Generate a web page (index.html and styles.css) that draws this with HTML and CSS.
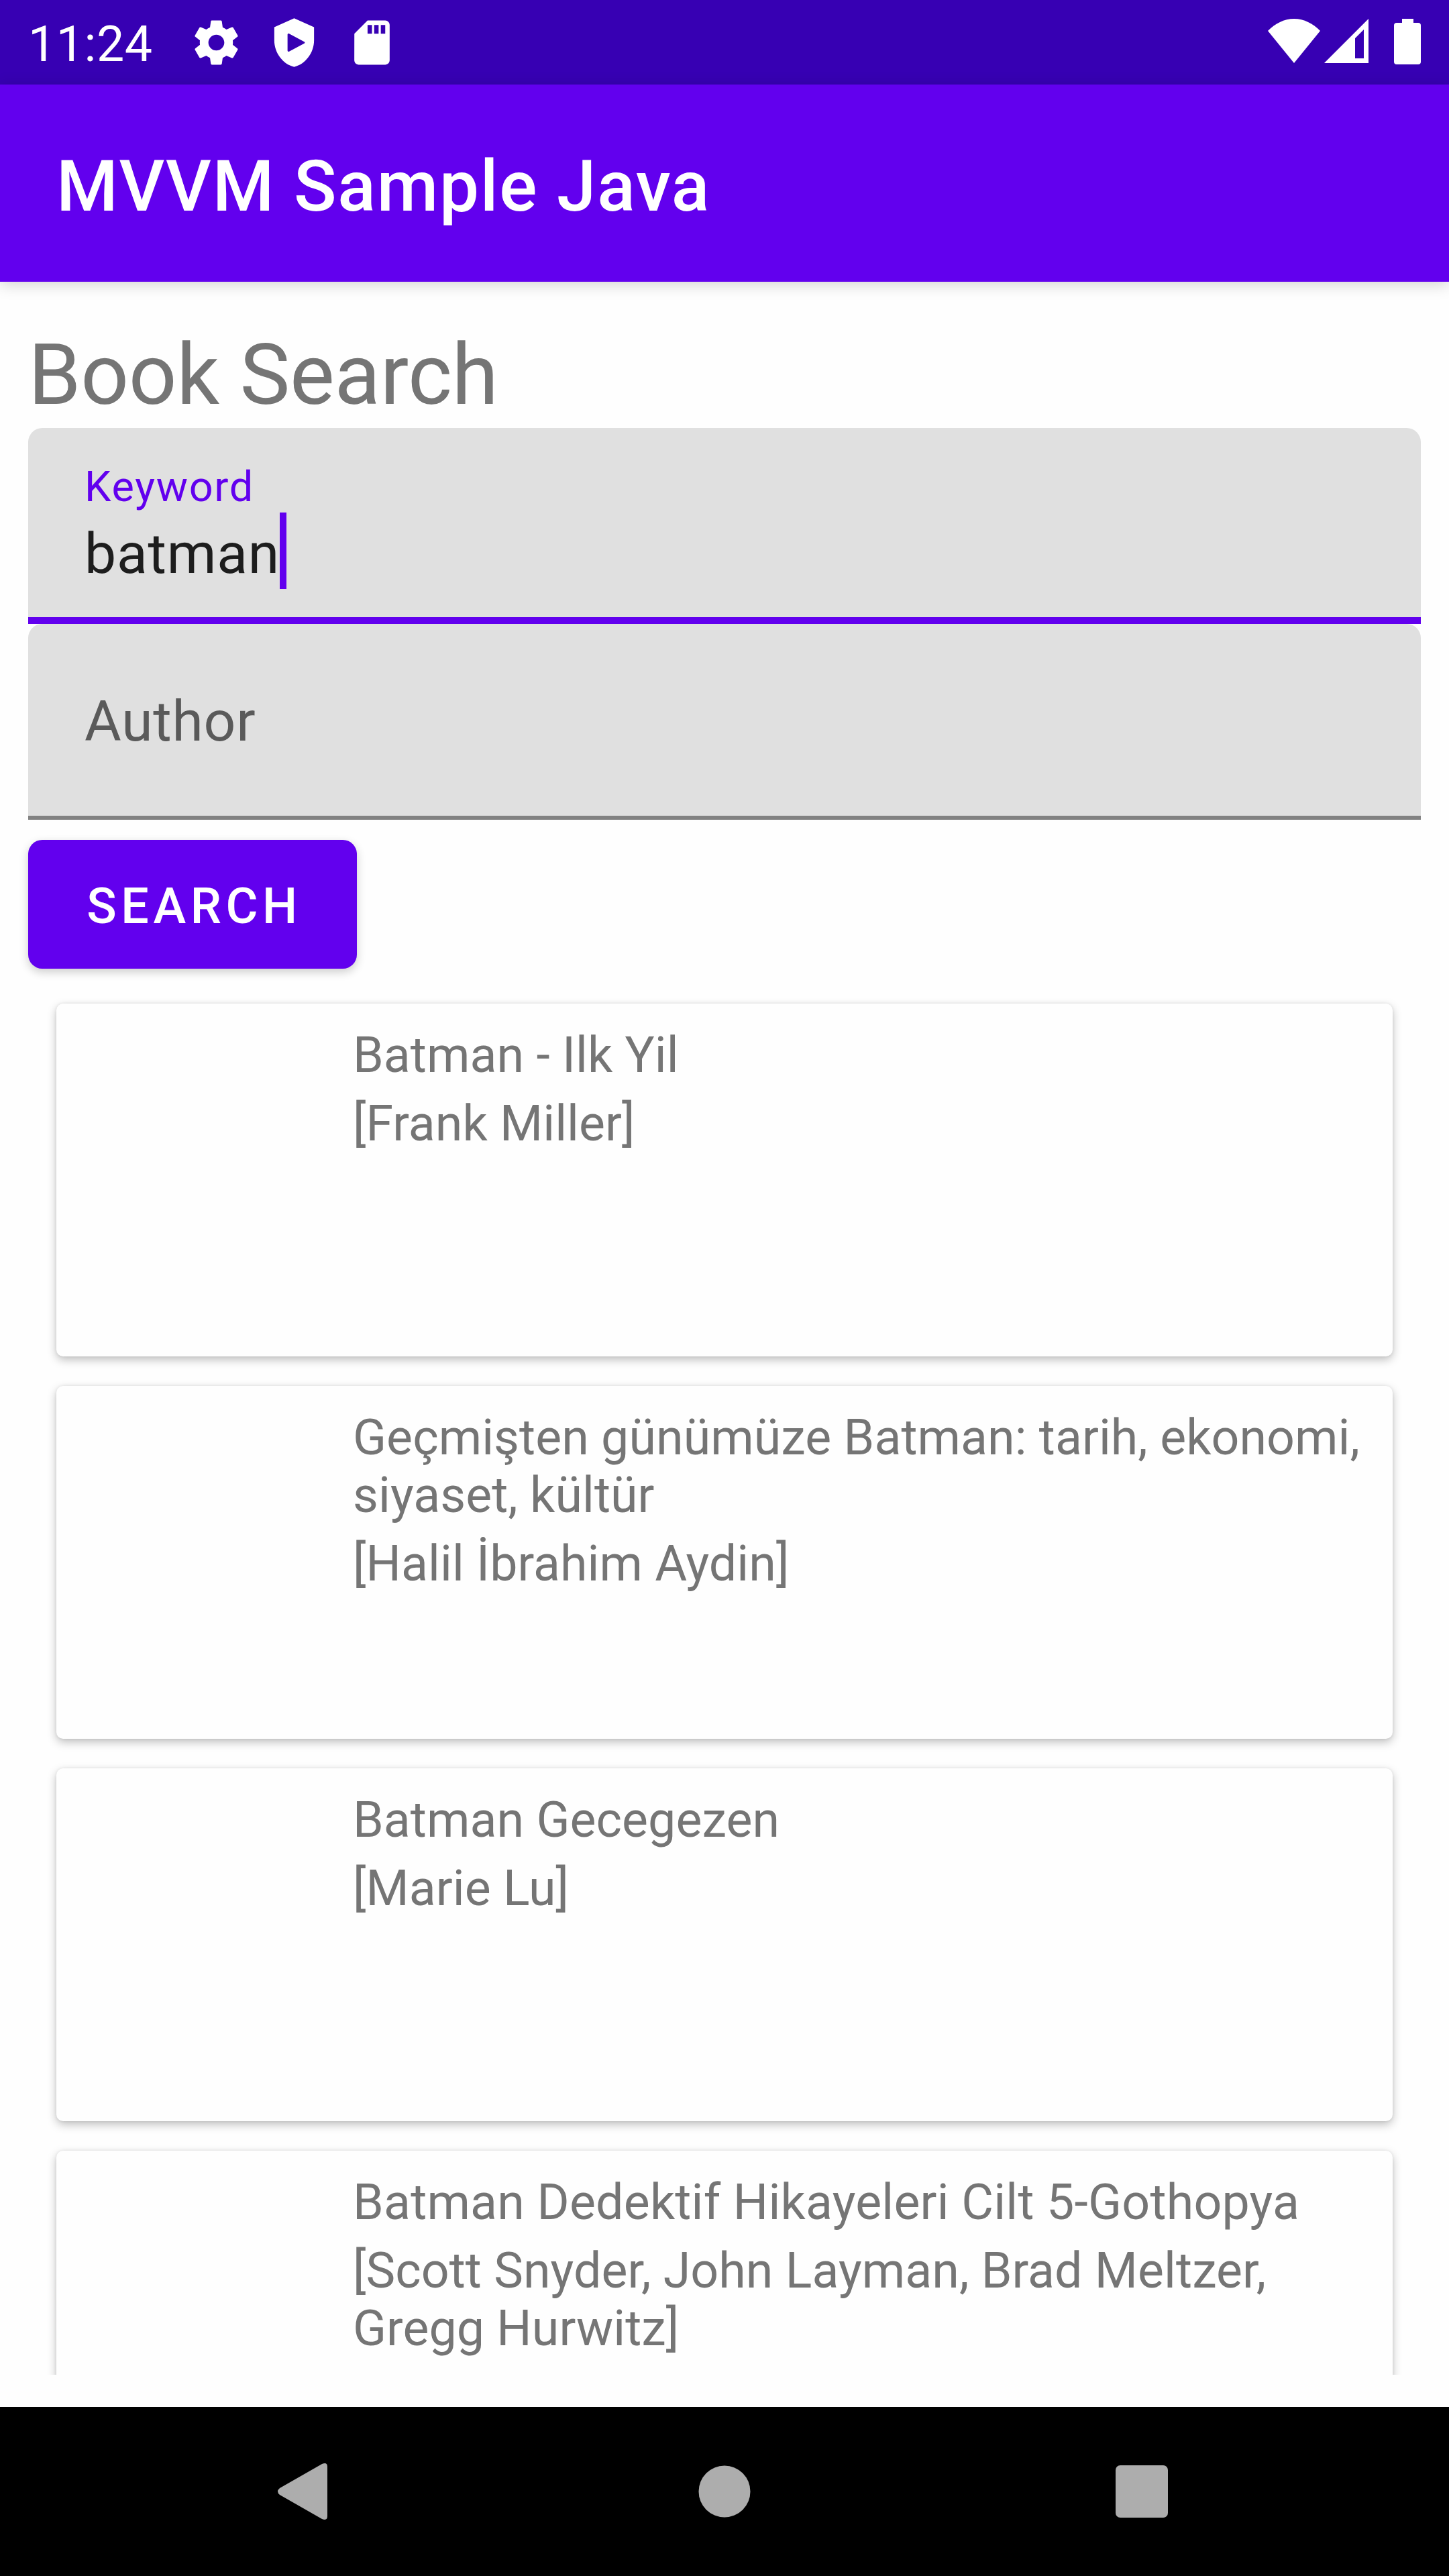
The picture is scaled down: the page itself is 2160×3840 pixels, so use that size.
FILE: index.html
```html
<!DOCTYPE html>
<html lang="en">
<head>
<meta charset="utf-8">
<title>MVVM Sample Java</title>
<link rel="stylesheet" href="styles.css">
</head>
<body>
<div class="screen">
  <header class="status-bar">
    <span class="clock">11:24</span>
    <div class="notifications">
      <svg class="status-icon" viewBox="0 0 24 24"><path d="M19.43 12.98c.04-.32.07-.64.07-.98s-.03-.66-.07-.98l2.11-1.65c.19-.15.24-.42.12-.64l-2-3.46c-.12-.22-.39-.3-.61-.22l-2.49 1c-.52-.4-1.08-.73-1.69-.98l-.38-2.65C14.46 2.18 14.25 2 14 2h-4c-.25 0-.46.18-.49.42l-.38 2.65c-.61.25-1.17.59-1.69.98l-2.49-1c-.23-.09-.49 0-.61.22l-2 3.46c-.13.22-.07.49.12.64l2.11 1.65c-.04.32-.07.65-.07.98s.03.66.07.98l-2.11 1.65c-.19.15-.24.42-.12.64l2 3.46c.12.22.39.3.61.22l2.49-1c.52.4 1.08.73 1.69.98l.38 2.65c.03.24.24.42.49.42h4c.25 0 .46-.18.49-.42l.38-2.65c.61-.25 1.17-.59 1.69-.98l2.49 1c.23.09.49 0 .61-.22l2-3.46c.12-.22.07-.49-.12-.64l-2.11-1.65zM12 15.6c-1.98 0-3.6-1.62-3.6-3.6s1.62-3.6 3.6-3.6 3.6 1.62 3.6 3.6-1.62 3.6-3.6 3.6z"/></svg>
      <svg class="status-icon" viewBox="0 0 24 24"><path fill-rule="evenodd" d="M12 1 3 5v6c0 5.55 3.84 10.74 9 12 5.16-1.26 9-6.45 9-12V5l-9-4zM9 8.4c0-.4.4-.65.75-.4l6.8 3.6c.4.2.4.6 0 .8l-6.8 3.6c-.35.2-.75 0-.75-.4V8.4z"/></svg>
      <svg class="status-icon" viewBox="0 0 24 24"><path d="M18 2h-8L4.02 8 4 20c0 1.100.9 2 2 2h12c1.100 0 2-.9 2-2V4c0-1.100-.9-2-2-2zm-6 6h-2V4h2v4zm3 0h-2V4h2v4zm3 0h-2V4h2v4z"/></svg>
    </div>
    <div class="system">
      <svg class="wifi" viewBox="0 0 78 66"><path d="M0 18C11 7 24 0 39 0s28 7 39 18L39 66z"/></svg>
      <svg class="signal" viewBox="0 0 66 66"><path fill-rule="evenodd" d="M66 0v66H0zM46 29v30h13V16z"/></svg>
      <svg class="battery" viewBox="0 0 40 68"><path d="M12 0h17v6h7a4 4 0 0 1 4 4v54a4 4 0 0 1-4 4H4a4 4 0 0 1-4-4V10a4 4 0 0 1 4-4h8z"/></svg>
    </div>
  </header>

  <div class="app-bar"><h1 class="app-title">MVVM Sample Java</h1></div>

  <main class="content">
    <h2 class="heading">Book Search</h2>
    <div class="field field-focused">
      <span class="field-label">Keyword</span>
      <div class="field-entry"><span class="field-value">batman</span><i class="caret"></i></div>
    </div>
    <div class="field field-empty"><span class="field-hint">Author</span></div>
    <button class="search-button" type="button">SEARCH</button>

    <div class="results">
      <article class="card">
        <div class="cover"></div>
        <div class="book"><p class="book-title">Batman - Ilk Yil</p><p class="book-author">[Frank Miller]</p></div>
      </article>
      <article class="card">
        <div class="cover"></div>
        <div class="book"><p class="book-title">Geçmişten günümüze Batman: tarih, ekonomi, siyaset, kültür</p><p class="book-author">[Halil İbrahim Aydin]</p></div>
      </article>
      <article class="card">
        <div class="cover"></div>
        <div class="book"><p class="book-title">Batman Gecegezen</p><p class="book-author">[Marie Lu]</p></div>
      </article>
      <article class="card">
        <div class="cover"></div>
        <div class="book"><p class="book-title book-title-long">Batman Dedektif Hikayeleri Cilt 5-Gothopya</p><p class="book-author">[Scott Snyder, John Layman, Brad Meltzer, Gregg Hurwitz]</p></div>
      </article>
    </div>
  </main>

  <nav class="nav-bar">
    <div class="nav-item"><svg class="nav-back" viewBox="0 0 74 84"><path d="M3 37 66 1q8-3 8 4v74q0 7-8 4L3 47q-6-5 0-10z"/></svg></div>
    <div class="nav-item"><svg class="nav-home" viewBox="0 0 78 78"><circle cx="39" cy="39" r="38.500"/></svg></div>
    <div class="nav-item"><svg class="nav-recent" viewBox="0 0 80 80"><rect x="1" y="1" width="78" height="78" rx="7"/></svg></div>
  </nav>
</div>
</body>
</html>
```
FILE: styles.css
```css
* { box-sizing: border-box; }

body, h1, h2, p { margin: 0; }

body {
  font-family: Roboto, "Liberation Sans", sans-serif;
  font-weight: 400;
  background: #fefefe;
}

svg { display: block; flex: none; }

.screen {
  display: flex;
  flex-direction: column;
  width: 2160px;
  height: 3840px;
  overflow: hidden;
}

.status-bar {
  display: flex;
  align-items: center;
  flex: none;
  height: 126px;
  padding: 0 42px;
  background: #3700b3;
  color: #fff;
  fill: #fff;
}

.clock {
  width: 241px;
  font-size: 73.5px;
  line-height: 86px;
  letter-spacing: .5px;
  padding-top: 6px;
}

.notifications { display: flex; gap: 37px; }

.status-icon { width: 79px; height: 79px; }

.system {
  display: flex;
  align-items: flex-start;
  margin-left: auto;
  height: 70px;
}

.wifi { width: 78px; height: 66px; }
.signal { width: 66px; height: 66px; margin-left: 6px; }
.battery { width: 40px; height: 68px; margin-left: 38px; }

.app-bar {
  position: relative;
  display: flex;
  align-items: center;
  flex: none;
  height: 294px;
  padding-left: 84px;
  background: #6200ee;
  color: #fff;
  box-shadow: 0 4px 22px rgba(0, 0, 0, .18);
}

.app-title {
  padding-top: 12px;
  font-size: 105px;
  font-weight: 500;
  line-height: 124px;
  letter-spacing: 1.75px;
}

.content {
  display: flex;
  flex-direction: column;
  flex: 1;
  min-height: 0;
  padding: 65px 42px 48px;
}

.heading {
  height: 153px;
  font-size: 126px;
  font-weight: 400;
  line-height: 148px;
  letter-spacing: -.35px;
  color: #757575;
}

.field {
  flex: none;
  height: 292px;
  padding-left: 84px;
  border-radius: 21px 21px 0 0;
  background: #e0e0e0;
}

/* the underline keeps square ends */
.field-focused { padding-top: 51px; border-bottom: 10px solid #6200ee; }

.field-label {
  display: block;
  font-size: 63px;
  line-height: 74px;
  letter-spacing: 1.7px;
  color: #6200ee;
}

.field-entry { display: flex; align-items: center; height: 116px; }

.field-value {
  padding-top: 9px;
  font-size: 84px;
  line-height: 98px;
  letter-spacing: .8px;
  color: #1d1d1d;
}

.caret { width: 10px; height: 114px; background: #6200ee; }

.field-empty {
  display: flex;
  align-items: center;
  border-bottom: 6px solid #828282;
}

.field-hint {
  padding-top: 5px;
  font-size: 84px;
  line-height: 98px;
  letter-spacing: .8px;
  color: #5a5a5a;
}

.search-button {
  flex: none;
  width: 490px;
  height: 192px;
  margin-top: 30px;
  padding: 5px 0 0 5px;
  border: 0;
  border-radius: 21px;
  background: #6200ee;
  box-shadow: 0 5px 14px rgba(0, 0, 0, .2);
  color: #fff;
  font: 500 73.5px/86px Roboto, "Liberation Sans", sans-serif;
  letter-spacing: 6.56px;
}

.results {
  display: flex;
  flex-direction: column;
  flex: 1;
  gap: 44px;
  min-height: 0;
  padding: 52px 42px 0;
  overflow: hidden;
}

.card {
  display: flex;
  flex: none;
  height: 526px;
  padding: 34px 21px 0;
  border-radius: 10px;
  background: #fefefe;
  box-shadow: 0 5px 14px rgba(0, 0, 0, .25), 0 0 4px rgba(0, 0, 0, .08);
}

.cover { flex: none; width: 421px; }

.book {
  display: flex;
  flex-direction: column;
  flex: 1;
  gap: 16px;
  font-size: 73.5px;
  line-height: 86px;
  letter-spacing: .05px;
  color: #757575;
}

.book-title-long { letter-spacing: .2px; }

.nav-bar {
  display: flex;
  align-items: center;
  justify-content: center;
  flex: none;
  height: 252px;
  background: #000;
  fill: #adadad;
}

.nav-item { display: flex; justify-content: center; width: 622px; }

.nav-back { width: 74px; height: 84px; margin-right: 14px; }
.nav-home { width: 78px; height: 78px; }
.nav-recent { width: 80px; height: 80px; }
```
